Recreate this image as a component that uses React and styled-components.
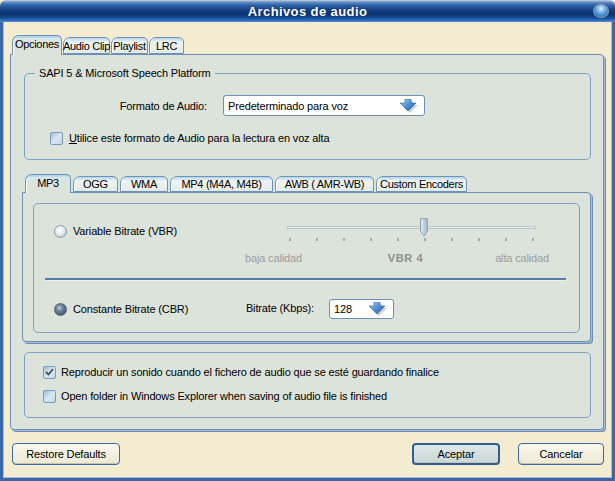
import React from "react";
import styled, { createGlobalStyle } from "styled-components";

const GlobalStyle = createGlobalStyle`
  html, body { margin: 0; padding: 0; background: #f4ecd1; }
  body {
    font-family: "Liberation Sans", Arial, sans-serif;
    font-size: 11px;
    letter-spacing: -0.15px;
    color: #000;
  }
  * { box-sizing: border-box; }
`;

const Window = styled.div`
  width: 615px;
  height: 481px;
  display: flex;
  flex-direction: column;
  background: #f4ecd1;
`;

const TitleBar = styled.div`
  height: 22px;
  flex: none;
  display: flex;
  align-items: center;
  justify-content: center;
  position: relative;
  border-radius: 6px 6px 0 0;
  background: linear-gradient(
    to bottom,
    #c9d2de 0px,
    #6a93c8 2px,
    #2f63a8 5px,
    #123f80 10px,
    #0b316c 14px,
    #184d98 18px,
    #3a78c8 21px,
    #5a8fd2 22px
  );
`;

const Title = styled.span`
  color: #fff;
  font-weight: bold;
  font-size: 13px;
  letter-spacing: 0.4px;
  text-shadow: 0 0 1px #0a2a60;
`;

const Orb = styled.div`
  position: absolute;
  right: 6px;
  top: 4px;
  width: 16px;
  height: 14px;
  border-radius: 50%;
  border: 1px solid #8d9aa8;
  background: radial-gradient(circle at 50% 30%, #d8eefc 0, #7ab6e6 35%, #2f74c0 75%, #1c4f8e 100%);
`;

const Frame = styled.div`
  flex: 1;
  display: flex;
  flex-direction: column;
  padding: 12px 8px 0 7px;
  border-left: 3px solid #3c67a6;
  border-right: 3px solid #3c67a6;
  border-bottom: 3px solid #3c67a6;
  box-shadow: inset 1px 0 0 #a7bcd8, inset -1px 0 0 #a7bcd8, inset 0 -1px 0 #a7bcd8;
`;

const TabRow = styled.div`
  display: flex;
  align-items: flex-end;
  gap: ${p => p.$gap}px;
  height: ${p => p.$h}px;
  margin-top: ${p => p.$mt || 0}px;
  padding-left: ${p => p.$indent}px;
  position: relative;
  z-index: 1;
`;

const Tab = styled.div`
  width: ${p => p.$w}px;
  height: ${p => (p.$active ? p.$h + 2 : p.$h - 1)}px;
  margin-bottom: ${p => (p.$active ? -1 : 0)}px;
  display: flex;
  align-items: center;
  justify-content: center;
  padding-bottom: ${p => (p.$active ? 3 : 0)}px;
  white-space: nowrap;
  letter-spacing: -0.3px;
  border: 1px solid #6d93bb;
  border-bottom: ${p => (p.$active ? "none" : "1px solid #6d93bb")};
  border-radius: 7px 5px 0 0;
  background: ${p =>
    p.$active
      ? "linear-gradient(to bottom, #a9cfe6 0px, #d9e8ec 3px, #dce3db 8px)"
      : "linear-gradient(to bottom, #b6d6ea 0px, #eef4f3 4px, #e4eae4 100%)"};
  box-shadow: inset 1px 0 0 #ffffff;
`;

const Panel = styled.div`
  display: flex;
  flex-direction: column;
  background: #dce3db;
  border: 1px solid #6d8fb6;
  border-radius: 0 4px 4px 4px;
  box-shadow: 1px 1px 0 #aabdd2, 2px 2px 0 #6d8fb6;
  padding: ${p => p.$pad};
  margin: ${p => p.$margin || 0};
  height: ${p => p.$h}px;
  flex: none;
`;

const Fieldset = styled.fieldset`
  margin: 0;
  padding: 0 0 14px 0;
  border: 1px solid #7f9fc3;
  border-radius: 5px;
  min-width: 0;
`;

const Legend = styled.legend`
  margin-left: 10px;
  padding: 0 4px;
  line-height: 13px;
  font-size: 11px;
`;

const Group = styled.div`
  border: 1px solid #7f9fc3;
  border-radius: 5px;
  display: flex;
  flex-direction: column;
  padding: ${p => p.$pad};
  height: ${p => p.$h}px;
  margin-top: ${p => p.$mt || 0}px;
`;

const FormRow = styled.div`
  display: flex;
  align-items: center;
  margin-top: ${p => p.$mt}px;
  padding-left: ${p => p.$indent || 0}px;
`;

const FieldLabel = styled.span`
  width: ${p => p.$w}px;
  text-align: right;
  margin-right: ${p => p.$gap}px;
  margin-top: ${p => p.$mt || 0}px;
  white-space: nowrap;
`;

const Select = styled.div`
  width: ${p => p.$w}px;
  height: ${p => p.$h}px;
  display: flex;
  align-items: center;
  justify-content: space-between;
  padding: 0 6px 0 4px;
  background: #fff;
  border: 1px solid #6d8fb6;
  border-radius: 3px;
  font-size: 11px;
`;

const ArrowIcon = () => (
  <svg width="18" height="14" viewBox="0 0 18 14">
    <defs>
      <linearGradient id="arrowGrad" x1="0" y1="0" x2="1" y2="1">
        <stop offset="0" stopColor="#b9dcf4" />
        <stop offset="0.5" stopColor="#4d8fd0" />
        <stop offset="1" stopColor="#1f5da8" />
      </linearGradient>
    </defs>
    <polygon points="6,1 12,1 12,5 17,5 9,13 1,5 6,5" fill="#9aa6b2" opacity="0.5" transform="translate(1,1)" />
    <polygon points="5,0 11,0 11,4 16,4 8,12 0,4 5,4" fill="url(#arrowGrad)" stroke="#2a62a6" strokeWidth="0.6" />
  </svg>
);

const CheckBox = styled.span`
  width: 13px;
  height: 13px;
  flex: none;
  display: inline-flex;
  align-items: center;
  justify-content: center;
  border: 1px solid #7f9ab8;
  border-radius: 2px;
  background: linear-gradient(135deg, #9fbedb 0%, #d9e8f3 50%, #c2d7e8 100%);
  margin-right: ${p => p.$gap}px;
`;

const Check = () => (
  <svg width="9" height="8" viewBox="0 0 9 8">
    <path d="M1 4 L3.5 6.5 L8 1" fill="none" stroke="#4a4f57" strokeWidth="1.8" />
  </svg>
);

const Radio = styled.span`
  width: 13px;
  height: 13px;
  flex: none;
  border-radius: 50%;
  border: 1px solid ${p => (p.$on ? "#4b6276" : "#8a99a8")};
  background: ${p =>
    p.$on
      ? "radial-gradient(circle at 40% 35%, #b8cad8 0, #6a8397 35%, #2f4659 100%)"
      : "radial-gradient(circle at 40% 35%, #ffffff 0, #e4eaef 45%, #a9b8c4 100%)"};
  margin-right: 6px;
`;

const OptionLine = styled.label`
  display: flex;
  align-items: center;
  height: 14px;
  white-space: nowrap;
  margin-top: ${p => p.$mt || 0}px;
  width: ${p => (p.$w ? `${p.$w}px` : "auto")};
`;

const SectionRow = styled.div`
  display: flex;
  align-items: flex-start;
  padding: ${p => p.$pad};
`;

const SliderBlock = styled.div`
  width: 304px;
  margin-left: auto;
  display: flex;
  flex-direction: column;
`;

const TrackArea = styled.div`
  position: relative;
  height: 20px;
  margin: 0 13px 0 42px;
`;

const Track = styled.div`
  position: absolute;
  left: 0;
  right: 0;
  top: 8px;
  height: 3px;
  border: 1px solid #b9c8cf;
  background: #e4ebea;
`;

const Thumb = styled.div`
  position: absolute;
  top: 0;
  left: ${p => p.$pos}px;
  width: 10px;
  height: 19px;
`;

const ThumbIcon = () => (
  <svg width="10" height="19" viewBox="0 0 10 19">
    <defs>
      <linearGradient id="thumbGrad" x1="0" y1="0" x2="1" y2="0">
        <stop offset="0" stopColor="#e8eef2" />
        <stop offset="0.5" stopColor="#c3d0da" />
        <stop offset="1" stopColor="#9fb2c2" />
      </linearGradient>
    </defs>
    <path d="M1.5 0.5 H8.5 V13 L5 18 L1.5 13 Z" fill="url(#thumbGrad)" stroke="#8ea2b4" />
  </svg>
);

const Ticks = styled.div`
  display: flex;
  justify-content: space-between;
  margin: 0 15px 0 44px;
  height: 3px;
`;

const TickMark = styled.span`
  width: 2px;
  height: 3px;
  background: #9aaec4;
`;

const ScaleLabels = styled.div`
  display: flex;
  justify-content: space-between;
  margin-top: 11px;
  color: #9a9e9c;
`;

const ScaleValue = styled.span`
  font-weight: bold;
  color: #8d918f;
  margin-left: 14px;
  letter-spacing: 0.6px;
`;

const Separator = styled.div`
  margin: 14px 13px 0 11px;
  border-top: 2px solid #5a7ca8;
  border-bottom: 1px solid #eef2ee;
`;

const ButtonBar = styled.div`
  display: flex;
  align-items: center;
  gap: 18px;
  margin-top: 13px;
  padding-left: 2px;
`;

const Button = styled.button`
  width: ${p => p.$w}px;
  height: 22px;
  font-family: inherit;
  font-size: 11px;
  letter-spacing: inherit;
  color: #000;
  border: ${p => (p.$primary ? "2px solid #2f5f98" : "1px solid #3e6aa0")};
  border-radius: 4px;
  background: ${p =>
    p.$primary
      ? "linear-gradient(to bottom, #dfe8e6 0%, #c9d8d7 100%)"
      : "linear-gradient(to bottom, #fbf9ee 0%, #ece8d5 100%)"};
  box-shadow: inset 0 -1px 0 #c8c2a8;
  padding: 0;
  margin-left: ${p => (p.$push ? "auto" : "0")};
`;

const outerTabs = [
  { label: "Opciones", w: 50, active: true },
  { label: "Audio Clip", w: 47 },
  { label: "Playlist", w: 37 },
  { label: "LRC", w: 35 },
];

const codecTabs = [
  { label: "MP3", w: 46, active: true },
  { label: "OGG", w: 45 },
  { label: "WMA", w: 48 },
  { label: "MP4 (M4A, M4B)", w: 103 },
  { label: "AWB ( AMR-WB)", w: 99 },
  { label: "Custom Encoders", w: 91 },
];

const TICK_COUNT = 10;
const VBR_LEVEL = 5;

export default function App() {
  const trackWidth = 249;
  const thumbPos = 2 + (VBR_LEVEL * (trackWidth - 8)) / (TICK_COUNT - 1) - 4;

  return (
    <>
      <GlobalStyle />
      <Window>
        <TitleBar>
          <Title>Archivos de audio</Title>
          <Orb />
        </TitleBar>
        <Frame>
          <TabRow $h={20} $gap={1} $indent={2}>
            {outerTabs.map(t => (
              <Tab key={t.label} $w={t.w} $h={18} $active={t.active}>
                {t.label}
              </Tab>
            ))}
          </TabRow>
          <Panel $h={376} $pad="12px 12px 11px 13px">
            <Fieldset>
              <Legend>SAPI 5 &amp; Microsoft Speech Platform</Legend>
              <FormRow $mt={15}>
                <FieldLabel $w={182} $gap={16}>Formato de Audio:</FieldLabel>
                <Select $w={202} $h={21}>
                  Predeterminado para voz
                  <ArrowIcon />
                </Select>
              </FormRow>
              <FormRow $mt={15} $indent={25}>
                <OptionLine>
                  <CheckBox $gap={6} />
                  <span><u>U</u>tilice este formato de Audio para la lectura en voz alta</span>
                </OptionLine>
              </FormRow>
            </Fieldset>

            <TabRow $h={18} $gap={2} $indent={1} $mt={14}>
              {codecTabs.map(t => (
                <Tab key={t.label} $w={t.w} $h={17} $active={t.active}>
                  {t.label}
                </Tab>
              ))}
            </TabRow>
            <Panel $h={150} $pad="10px 10px 8px 10px" $margin="0 0 0 -2px">
              <Group $h={131}>
                <SectionRow $pad="14px 30px 0 20px">
                  <OptionLine $mt={6}>
                    <Radio />
                    Variable Bitrate (VBR)
                  </OptionLine>
                  <SliderBlock>
                    <TrackArea>
                      <Track />
                      <Thumb $pos={thumbPos}>
                        <ThumbIcon />
                      </Thumb>
                    </TrackArea>
                    <Ticks>
                      {Array.from({ length: TICK_COUNT }, (_, i) => (
                        <TickMark key={i} />
                      ))}
                    </Ticks>
                    <ScaleLabels>
                      <span>baja calidad</span>
                      <ScaleValue>VBR 4</ScaleValue>
                      <span>alta calidad</span>
                    </ScaleLabels>
                  </SliderBlock>
                </SectionRow>
                <Separator />
                <SectionRow $pad="18px 0 0 20px">
                  <OptionLine $mt={3} $w={189}>
                    <Radio $on />
                    Constante Bitrate (CBR)
                  </OptionLine>
                  <FieldLabel $w={71} $gap={15} $mt={3}>
                    Bitrate (Kbps):
                  </FieldLabel>
                  <Select $w={65} $h={20}>
                    128
                    <ArrowIcon />
                  </Select>
                </SectionRow>
              </Group>
            </Panel>

            <Group $h={66} $mt={10} $pad="12px 0 0 18px">
              <OptionLine>
                <CheckBox $gap={5}>
                  <Check />
                </CheckBox>
                Reproducir un sonido cuando el fichero de audio que se esté guardando finalice
              </OptionLine>
              <OptionLine $mt={10}>
                <CheckBox $gap={5} />
                Open folder in Windows Explorer when saving of audio file is finished
              </OptionLine>
            </Group>
          </Panel>

          <ButtonBar>
            <Button $w={108}>Restore Defaults</Button>
            <Button $w={88} $primary $push>
              Aceptar
            </Button>
            <Button $w={86}>Cancelar</Button>
          </ButtonBar>
        </Frame>
      </Window>
    </>
  );
}
